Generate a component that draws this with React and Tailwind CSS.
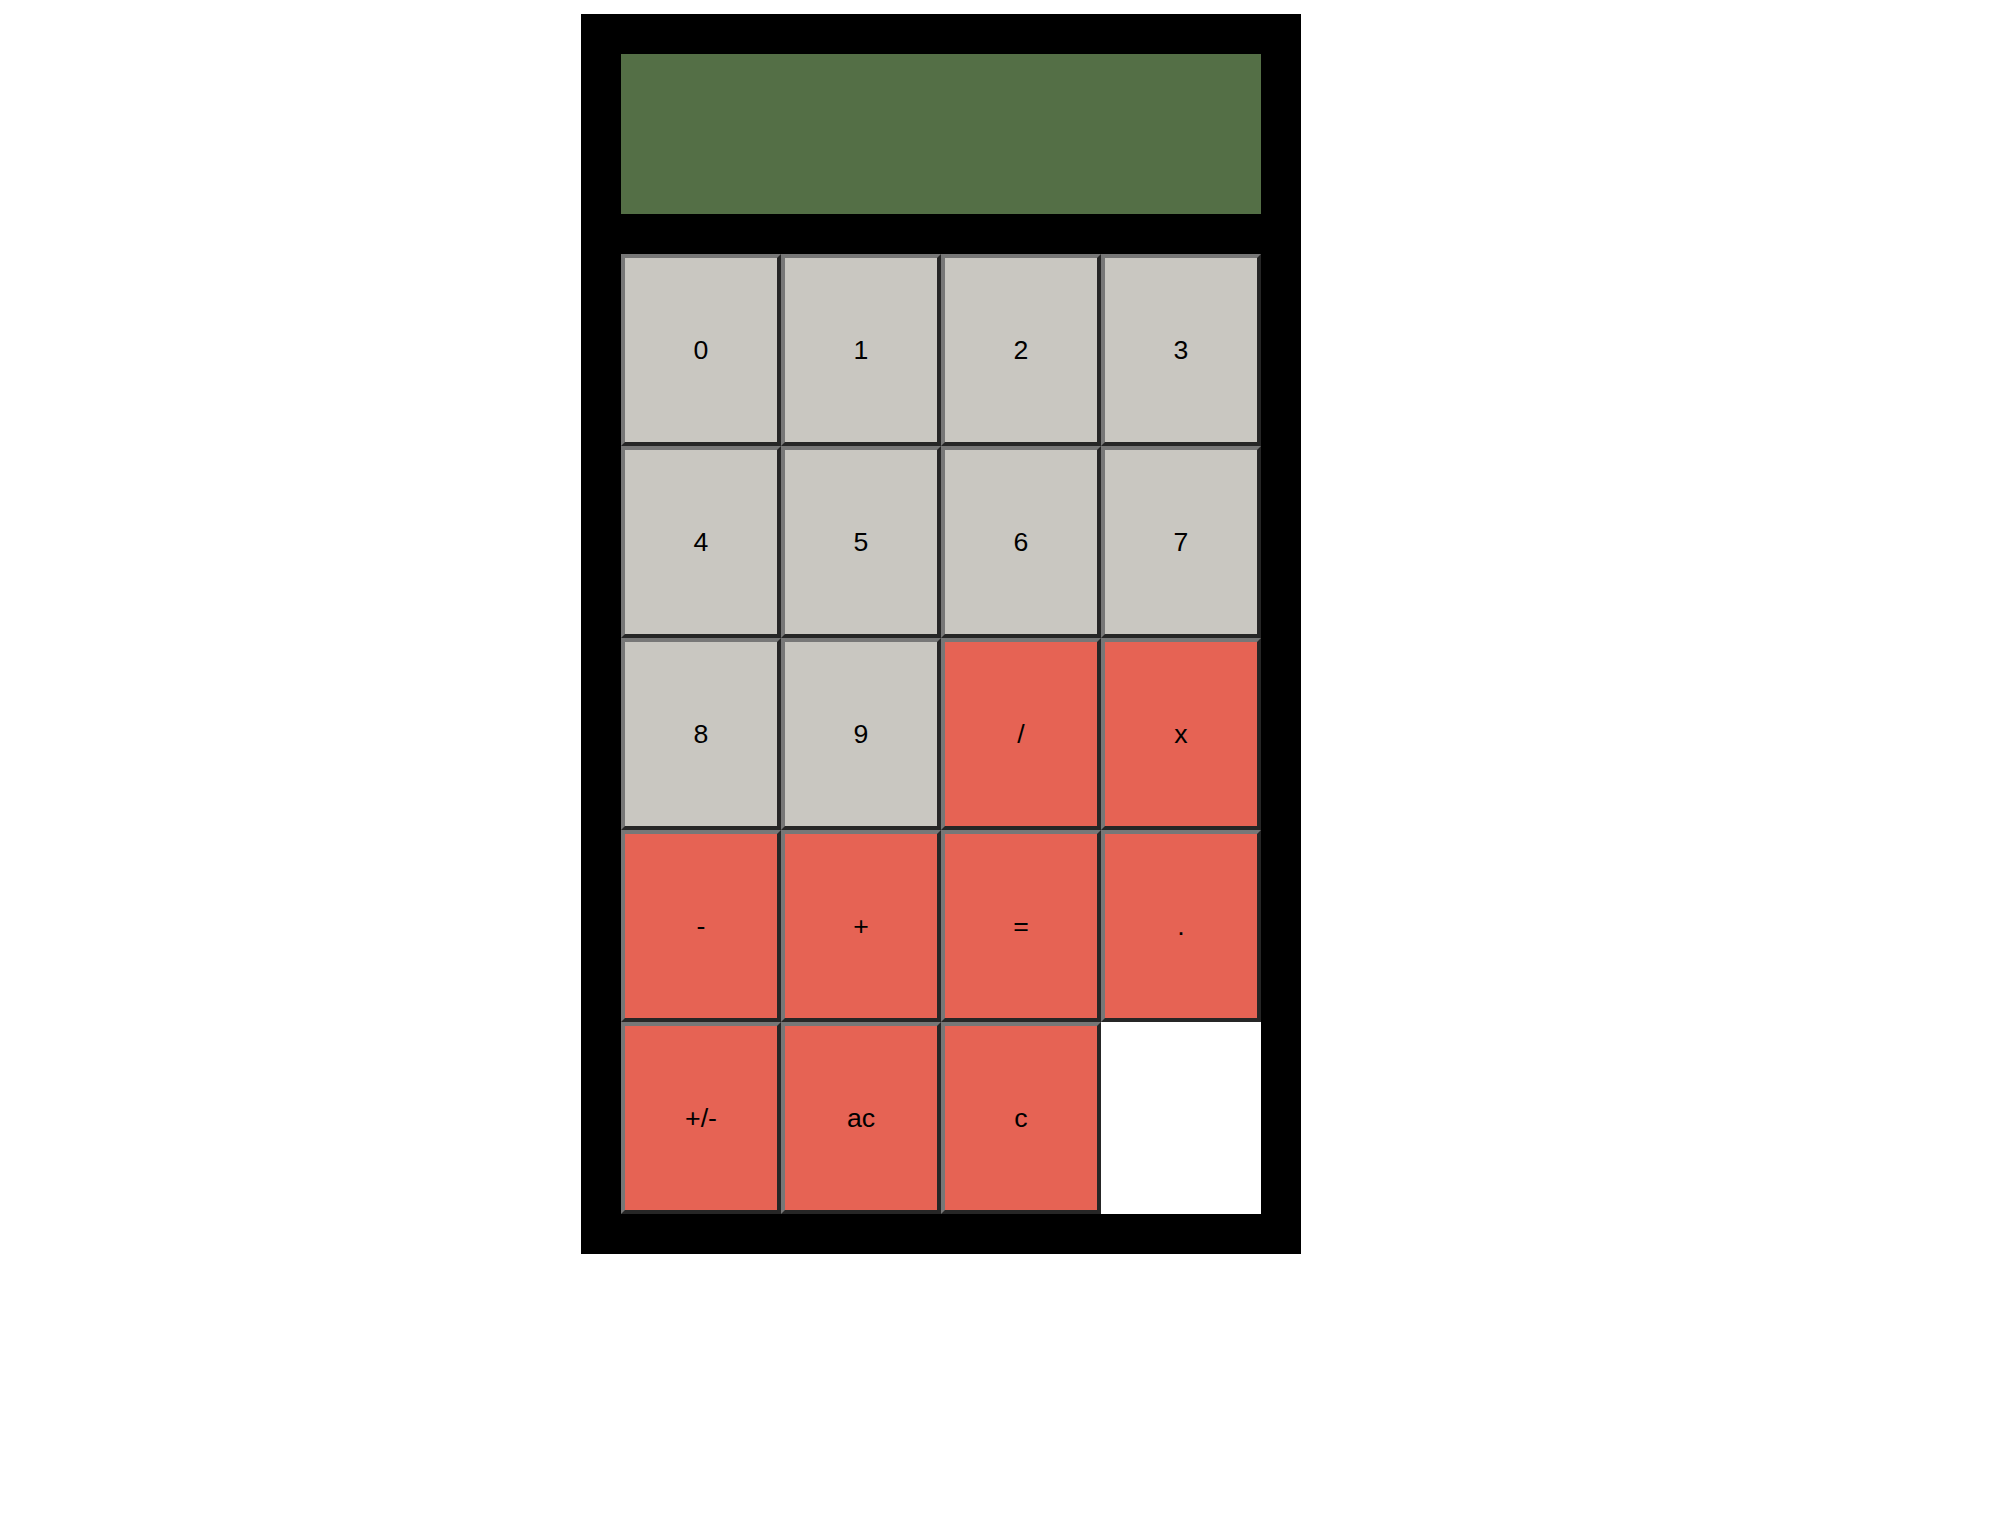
import React from 'react';

const keys = [
    { label: '0', op: false }, { label: '1', op: false }, { label: '2', op: false }, { label: '3', op: false },
    { label: '4', op: false }, { label: '5', op: false }, { label: '6', op: false }, { label: '7', op: false },
    { label: '8', op: false }, { label: '9', op: false }, { label: '/', op: true }, { label: 'x', op: true },
    { label: '-', op: true }, { label: '+', op: true }, { label: '=', op: true }, { label: '.', op: true },
    { label: '+/-', op: true }, { label: 'ac', op: true }, { label: 'c', op: true },
];

function Key({ label, op }) {
    return (
        <button
            className={
                "h-[192px] w-full border-4 border-t-[#777777] border-l-[#777777] border-b-[#262626] border-r-[#262626] text-black text-[26.67px] " +
                (op ? "bg-[#e66354]" : "bg-[#c9c7c1]")
            }
        >
            {label}
        </button>
    );
}

export default function App() {
    return (
        <div className="min-h-[1524px] bg-white pt-[14px] pl-[581px]" style={{ fontFamily: '"Liberation Sans", Arial, sans-serif' }}>
            <div className="w-[720px] bg-black p-[40px] flex flex-col gap-[40px]">
                <div className="h-[160px] bg-[#546f46]"></div>
                <div className="grid grid-cols-4 bg-white">
                    {keys.map(k => (
                        <Key key={k.label} label={k.label} op={k.op} />
                    ))}
                </div>
            </div>
        </div>
    );
}
